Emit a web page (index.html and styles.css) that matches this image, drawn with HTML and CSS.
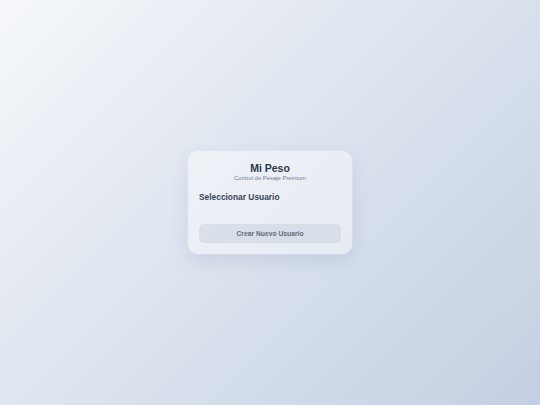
FILE: index.html
```html
<!DOCTYPE html>
<html lang="es">
<head>
<meta charset="utf-8">
<title>Mi Peso</title>
<link rel="stylesheet" href="styles.css">
</head>
<body>
<main class="page">
  <section class="card">
    <header class="brand">
      <h1 class="title">Mi Peso</h1>
      <p class="subtitle">Control de Pesaje Premium</p>
    </header>
    <h2 class="section-title">Seleccionar Usuario</h2>
    <div class="user-list"></div>
    <button class="btn-create" type="button">Crear Nuevo Usuario</button>
  </section>
</main>
</body>
</html>
```

FILE: styles.css
```css
* { box-sizing: border-box; }
html, body { margin: 0; padding: 0; height: 100%; }
body {
  font-family: "Liberation Sans", Arial, sans-serif;
  background: linear-gradient(135deg, #f5f7fa 0%, #c3cfe2 100%);
  min-height: 100vh;
}
.page {
  height: 100vh;
  display: flex;
  align-items: center;
  justify-content: center;
}
.card {
  width: 164px;
  height: 103px;
  padding: 11px;
  border-radius: 10px;
  background: rgba(255, 255, 255, 0.42);
  box-shadow: 0 0 0 0.5px rgba(255, 255, 255, 0.35), 0 6px 18px rgba(60, 80, 140, 0.13);
  display: flex;
  flex-direction: column;
}
.brand { text-align: center; }
.title {
  margin: 0;
  font-size: 10.5px;
  line-height: 12px;
  font-weight: 700;
  color: #2d3748;
}
.subtitle {
  margin: 0.8px 0 0;
  font-size: 5.9px;
  line-height: 7px;
  color: #718096;
}
.section-title {
  margin: 10.5px 0 0;
  font-size: 8.4px;
  line-height: 10px;
  font-weight: 700;
  color: #3a4556;
}
.user-list { flex: 1; }
.btn-create {
  height: 19px;
  width: 100%;
  border: none;
  border-radius: 5px;
  background: rgba(200, 208, 220, 0.5);
  color: #5f6b7c;
  font-family: "Liberation Sans", Arial, sans-serif;
  font-size: 6.75px;
  font-weight: 700;
  padding: 0;
}
```
